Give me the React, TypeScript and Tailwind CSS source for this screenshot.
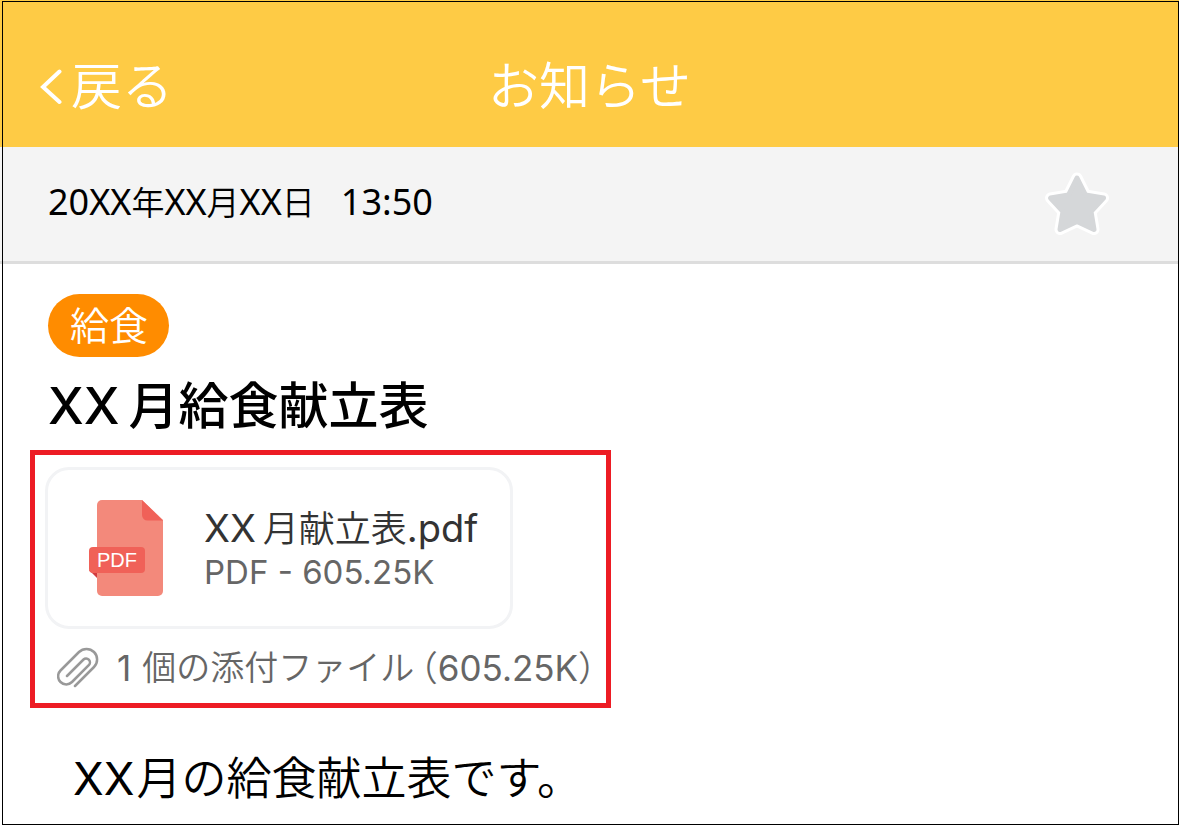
import { useState } from 'react';

const FILE_SIZE = '605.25K';

export default function App() {
  return (
    <div className="relative flex min-h-screen flex-col bg-white font-['Inter','Noto_Sans_CJK_JP',sans-serif] text-black">
      <Header />
      <DateBar />
      <main className="flex flex-col items-start px-[30px] pt-[30px]">
        <span className="ml-[18px] rounded-full bg-[#ff8c00] pr-[21px] pl-[22px] text-[39px] leading-[63px] font-[350] text-white">
          給食
        </span>
        <h2 className="ml-[18px] flex items-baseline gap-[9px] pt-[13px] pb-2 text-[51px] leading-[72px] font-medium">
          <span>XX</span>
          <span className="text-[50px]">月給食献立表</span>
        </h2>
        <Attachments />
        <p className="ml-[43px] flex gap-0.5 pt-[38px] text-[45px] leading-[66px] font-[350]">
          <span className="font-normal">XX</span>
          <span>月の給食献立表です。</span>
        </p>
      </main>
      {/* thin frame over the whole screen */}
      <div className="pointer-events-none absolute top-px right-0 bottom-0.5 left-0.5 border border-black" />
    </div>
  );
}

function Header() {
  return (
    <header className="grid h-[147px] grid-cols-[1fr_auto_1fr] items-center bg-[#fecb45] px-10 pt-[27px] text-white">
      <button type="button" className="flex items-center gap-[9px] justify-self-start text-[51px] leading-[72px] font-[350]">
        <svg viewBox="0 0 22 36" fill="none" className="h-9 w-[22px]" aria-hidden="true">
          <path d="M19.5 2.5 3 18l16.5 15" stroke="currentColor" strokeWidth="4" strokeLinecap="round" strokeLinejoin="miter" />
        </svg>
        戻る
      </button>
      <h1 className="text-[51px] leading-[72px] font-[350]">お知らせ</h1>
    </header>
  );
}

function DateBar() {
  const [starred, setStarred] = useState(false);

  return (
    <div className="flex h-[117px] items-center justify-between border-b-3 border-[#dddddd] bg-[#f4f4f4] pr-[70px] pl-12">
      <time className="flex gap-[26px] pb-1 font-['Noto_Sans','Noto_Sans_CJK_JP',sans-serif] text-[36px] leading-[48px]">
        <span>
          20XX<DateUnit>年</DateUnit>XX<DateUnit>月</DateUnit>XX<DateUnit>日</DateUnit>
        </span>
        <span>13:50</span>
      </time>
      <button
        type="button"
        aria-label="お気に入り"
        aria-pressed={starred}
        onClick={() => setStarred(!starred)}
        className={starred ? 'text-[#fecb45]' : 'text-[#d5d7d9]'}
      >
        <svg viewBox="0 0 64 64" className="h-16 w-16" aria-hidden="true">
          <path
            d="M32 6 40.500 23 58.500 26 46 39.500 49 57.500 32 49.500 15 57.500 18 39.500 5.500 26 23.500 23Z"
            fill="white"
            stroke="white"
            strokeWidth="11"
            strokeLinejoin="round"
          />
          <path
            d="M32 6 40.500 23 58.500 26 46 39.500 49 57.500 32 49.500 15 57.500 18 39.500 5.500 26 23.500 23Z"
            fill="currentColor"
            stroke="currentColor"
            strokeWidth="5"
            strokeLinejoin="round"
          />
        </svg>
      </button>
    </div>
  );
}

function DateUnit({ children }: { children: string }) {
  return <span className="text-[33px] font-[350]">{children}</span>;
}

function Attachments() {
  return (
    <section className="border-5 border-[#ed1c24] px-2.5 pt-3 pb-2.5">
      <a
        href="#menu-pdf"
        className="flex w-[468px] items-center gap-[41px] rounded-3xl border-3 border-[#f2f3f5] py-[30px] pl-[41px]"
      >
        <PdfIcon />
        <span className="flex flex-col pt-0.5">
          <span className="flex items-baseline text-[38px] leading-[44px] text-[#333333]">
            <span>XX</span>
            <span className="pl-[7px] text-[36px] font-[350]">月献立表</span>
            <span>.pdf</span>
          </span>
          <span className="text-[33px] leading-[42px] text-[#666666]">PDF - {FILE_SIZE}</span>
        </span>
      </a>
      <p className="flex items-center pt-[14px] pl-3 text-[35px] leading-[50px] text-[#666666]">
        <PaperclipIcon />
        <span className="pl-[18px]">1</span>
        <span className="pl-[11px] text-[34px] font-[350]">個の添付ファイル</span>
        <span className="pl-1.5 [font-feature-settings:'halt']">
          <span className="font-[350]">（</span>
          {FILE_SIZE}
          <span className="font-[350]">）</span>
        </span>
      </p>
    </section>
  );
}

function PdfIcon() {
  return (
    <svg viewBox="0 0 74 96" className="h-24 w-[74px] shrink-0" role="img" aria-label="PDF">
      <path d="M13 0h40l21 20v71a5 5 0 0 1-5 5H13a5 5 0 0 1-5-5V5a5 5 0 0 1 5-5Z" fill="#f3897b" />
      <path d="M53 0v15a5.500 5.500 0 0 0 5.500 5.500H74Z" fill="#f06158" />
      <path d="M0 70h8v8Z" fill="#d13b3f" />
      <rect y="47" width="56" height="26" rx="4" fill="#f06158" />
      <text x="8" y="67" fill="white" fontSize="20" className="font-['Liberation_Sans',sans-serif]">
        PDF
      </text>
    </svg>
  );
}

function PaperclipIcon() {
  return (
    <svg viewBox="7 7 42 42" fill="none" className="h-[42px] w-[42px]" stroke="#999999" strokeWidth="2.500" strokeLinecap="round" aria-hidden="true">
      <path d="M25 46 44 27A10.600 10.600 0 0 0 29 12L10.500 30.500A8.100 8.100 0 0 0 22 42L39 25A3.900 3.900 0 0 0 33.500 19.500L17 36" />
    </svg>
  );
}
